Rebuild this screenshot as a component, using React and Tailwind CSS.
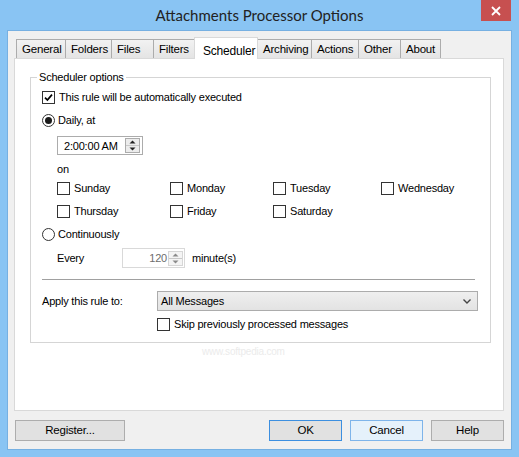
import React from "react";

const FONT = { fontFamily: "'Liberation Sans', Arial, sans-serif" };

const TABS = [
  { name: "General", w: 49 },
  { name: "Folders", w: 46 },
  { name: "Files", w: 42 },
  { name: "Filters", w: 41 },
  { name: "Scheduler", w: 63, active: true },
  { name: "Archiving", w: 54 },
  { name: "Actions", w: 47 },
  { name: "Other", w: 42 },
  { name: "About", w: 40 },
];

function Check({ checked = false, label, className = "" }) {
  return (
    <div className={`flex items-center gap-[4px] whitespace-nowrap ${className}`}>
      <span className="flex h-[13px] w-[13px] shrink-0 items-center justify-center border border-[#333333] bg-white">
        {checked && (
          <svg width="9" height="9" viewBox="0 0 9 9">
            <path d="M1 4.6 L3.4 7 L8 1.6" stroke="#000" strokeWidth="1.7" fill="none" />
          </svg>
        )}
      </span>
      <span className="pt-px">{label}</span>
    </div>
  );
}

function Radio({ checked = false, label, className = "" }) {
  return (
    <div className={`flex items-center gap-[3px] whitespace-nowrap ${className}`}>
      <span className="flex h-[13px] w-[13px] shrink-0 items-center justify-center rounded-full border border-[#333333] bg-white">
        {checked && <span className="h-[7px] w-[7px] rounded-full bg-[#1a1a1a]" />}
      </span>
      <span className="pt-px">{label}</span>
    </div>
  );
}

function SpinButtons({ disabled }) {
  const fill = disabled ? "#8a8a8a" : "#222";
  return (
    <div
      className={`flex h-[15px] w-[15px] shrink-0 flex-col border ${
        disabled ? "border-[#d6d6d6] bg-[#f4f4f4]" : "border-[#acacac] bg-[#ececec]"
      }`}
    >
      <div className="flex flex-1 items-center justify-center border-b border-[#c8c8c8]">
        <svg width="7" height="4" viewBox="0 0 7 4">
          <path d="M0.5 3.5 L3.5 0.5 L6.5 3.5 Z" fill={fill} />
        </svg>
      </div>
      <div className="flex flex-1 items-center justify-center">
        <svg width="7" height="4" viewBox="0 0 7 4">
          <path d="M0.5 0.5 L3.5 3.5 L6.5 0.5 Z" fill={fill} />
        </svg>
      </div>
    </div>
  );
}

function Button({ children, className = "" }) {
  return (
    <button
      type="button"
      className={`flex h-[21px] items-center justify-center border pt-px text-[11.5px] tracking-[-0.2px] text-black ${className}`}
    >
      {children}
    </button>
  );
}

export default function App() {
  return (
    <div
      className="flex h-[457px] w-[519px] flex-col bg-[#89c4f3] text-[11px] tracking-[-0.2px] text-black"
      style={FONT}
    >
      {/* title bar */}
      <div className="relative flex h-[30px] shrink-0 items-center justify-center">
        <span className="text-[15px] tracking-normal text-[#222222]" style={{ fontFamily: "Lato, 'Liberation Sans', sans-serif" }}>
          Attachments Processor Options
        </span>
        <div className="absolute right-[8px] top-0 flex h-[21px] w-[30px] items-center justify-center bg-[#c75050]">
          <svg width="10" height="10" viewBox="0 0 10 10">
            <path d="M1 1 L9 9 M9 1 L1 9" stroke="#fff" strokeWidth="1.8" />
          </svg>
        </div>
      </div>

      {/* client area */}
      <div className="mx-[7px] mb-[7px] flex flex-1 flex-col border border-[#76b0e2] bg-[#f0f0f0] pl-[6px] pr-[7px]">
        {/* tabs */}
        <div className="flex h-[27px] shrink-0 items-end pl-[2px] text-[11.5px]">
          {TABS.map((t) =>
            t.active ? (
              <div
                key={t.name}
                className="relative z-10 -mb-px -ml-px flex h-[22px] items-start whitespace-nowrap border border-b-0 border-[#d9d9d9] bg-white pl-[8px] pt-[4px] text-[12px]"
                style={{ width: t.w + 1 }}
              >
                {t.name}
              </div>
            ) : (
              <div
                key={t.name}
                className="-ml-px flex h-[19px] items-center whitespace-nowrap border border-b-0 border-[#acacac] bg-gradient-to-b from-[#f2f2f2] to-[#e4e4e4] pl-[5px] pt-px first:ml-0"
                style={{ width: t.w + 1 }}
              >
                {t.name}
              </div>
            )
          )}
        </div>

        {/* tab panel */}
        <div className="flex flex-1 flex-col border border-[#d9d9d9] bg-white pl-[15px] pr-[12px] pt-[18px]">
          <div className="relative border border-[#d5d5d5] pb-[8px] pl-[11px] pr-[15px] pt-[9px]">
            <span className="absolute left-[6px] top-[-8px] bg-white px-[2px] leading-[15px]">
              Scheduler options
            </span>

            <Check checked label="This rule will be automatically executed" className="h-[20px]" />
            <Radio checked label="Daily, at" className="mt-[3px] h-[20px]" />

            <div className="ml-[15px] mt-[6px] flex h-[19px] w-[86px] items-center justify-between whitespace-nowrap border border-[#acacac] bg-white pl-[6px] pr-[2px]">
              <span className="pt-px">2:00:00 AM</span>
              <SpinButtons />
            </div>

            <div className="ml-[15px] mt-[3px] flex h-[20px] items-center pt-[2px]">on</div>

            <div className="ml-[15px] flex h-[20px] items-center">
              <Check label="Sunday" className="w-[113px]" />
              <Check label="Monday" className="w-[103px]" />
              <Check label="Tuesday" className="w-[108px]" />
              <Check label="Wednesday" />
            </div>
            <div className="ml-[15px] mt-[3px] flex h-[20px] items-center">
              <Check label="Thursday" className="w-[113px]" />
              <Check label="Friday" className="w-[103px]" />
              <Check label="Saturday" className="w-[108px]" />
            </div>

            <Radio label="Continuously" className="mt-[3px] h-[20px]" />

            <div className="ml-[15px] mt-[4px] flex h-[20px] items-center">
              <span className="w-[65px] pt-px">Every</span>
              <div className="flex h-[20px] w-[63px] items-center justify-end gap-[1px] border border-[#d9d9d9] bg-white pr-[1px]">
                <span className="pt-px text-[#6d6d6d]">120</span>
                <SpinButtons disabled />
              </div>
              <span className="ml-[7px] pt-px">minute(s)</span>
            </div>

            <div className="mt-[11px] h-px bg-[#a0a0a0]" />

            <div className="mt-[11px] flex h-[20px] items-center">
              <span className="w-[115px] pt-px">Apply this rule to:</span>
              <div className="-mr-[3px] flex h-[20px] flex-1 items-center justify-between border border-[#acacac] bg-gradient-to-b from-[#efefef] to-[#e3e3e3] pl-[3px] pr-[6px]">
                <span className="pt-px">All Messages</span>
                <svg width="8" height="5" viewBox="0 0 8 5">
                  <path d="M0.5 0.5 L4 4 L7.5 0.5" stroke="#444" strokeWidth="1.4" fill="none" />
                </svg>
              </div>
            </div>

            <Check label="Skip previously processed messages" className="ml-[115px] mt-[3px] h-[20px]" />
          </div>
          <div className="ml-[172px] mt-[1px] text-[10px] text-[#ebebeb]">www.softpedia.com</div>
        </div>

        {/* buttons */}
        <div className="mb-[8px] mt-[9px] flex h-[21px] shrink-0 items-center pl-px">
          <Button className="w-[110px] border-[#adadad] bg-[#e1e1e1]">Register...</Button>
          <div className="flex-1" />
          <Button className="w-[73px] border-[#3c8fe0] bg-[#e1e1e1]">OK</Button>
          <Button className="ml-[8px] w-[73px] border-[#7eb4ea] bg-[#e5f1fb]">Cancel</Button>
          <Button className="ml-[8px] w-[73px] border-[#adadad] bg-[#e1e1e1]">Help</Button>
        </div>
      </div>
    </div>
  );
}
